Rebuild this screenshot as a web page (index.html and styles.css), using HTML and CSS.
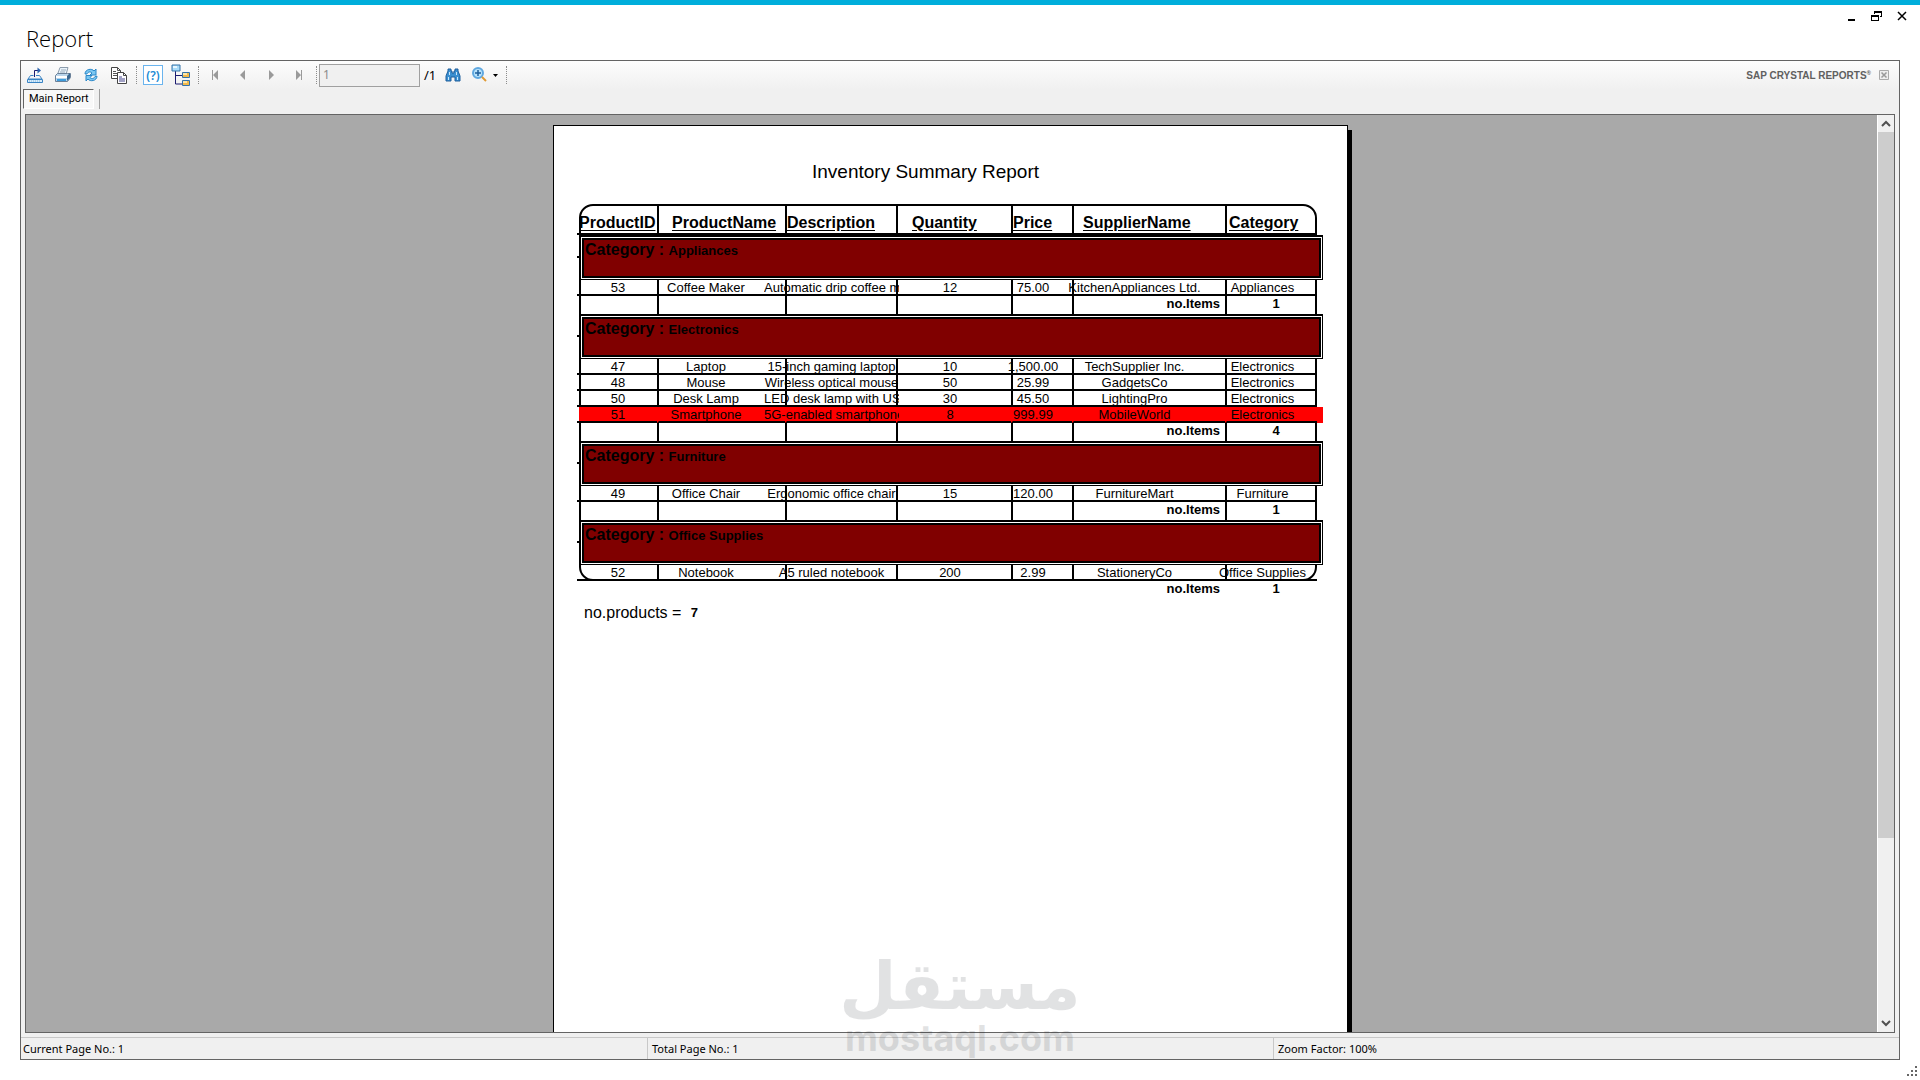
FILE: index.html
```
<!DOCTYPE html>
<html lang="en">
<head>
    <meta charset="UTF-8">
    <meta name="viewport" content="width=device-width, initial-scale=1.0">
    <title>Report</title>
    <link rel="stylesheet" href="styles.css">
</head>
<body>
    <header class="titlebar">
        <h1>Report</h1>
        <div class="window-buttons">
            <button type="button" aria-label="Minimize"><svg width="12" height="12"><path d="M2 9h7v2H2z"/></svg></button>
            <button type="button" aria-label="Restore"><svg width="12" height="12"><path d="M3 1h8v6H9V6h1V3H4v1H3zM0 5h8v6H0zM1 7v3h6V7z" fill-rule="evenodd"/></svg></button>
            <button type="button" aria-label="Close"><svg width="12" height="12"><path d="M2 2l8 8M10 2l-8 8" stroke="#000" stroke-width="1.500"/></svg></button>
        </div>
    </header>

    <main class="viewer">
        <div class="toolbar">
            <button type="button" aria-label="Export">
                <svg width="18" height="18" fill="none"><path d="M4.500 9.500L2 13h14l-2.500-3.500M4.500 9.500h3M10 9.500h3.500" stroke="#3a84c4"/><path d="M1.500 13.500h15v3h-15z" fill="#d8ecfa" stroke="#3a84c4"/><path d="M3 15h12" stroke="#7ab4e0" stroke-dasharray="1 1"/><path d="M8.500 11V4.500H14" stroke="#1c1c70"/><path d="M11.500 1.500l3.500 3-3.500 3z" fill="#2a62ac"/></svg>
            </button>
            <button type="button" aria-label="Print">
                <svg width="18" height="18"><path d="M6 1.500h8l-2 7H3.500z" fill="#eaf4fb" stroke="#8c9cac"/><path d="M7 4h5M6 6h5" stroke="#9aaabb"/><path d="M1.500 9.500l2-2h10l3 0v4l-3 4h-12z" fill="#b9d4ea" stroke="#6b8199"/><path d="M2 10h11v2H2z" fill="#fff"/><path d="M3 13h9v2H3z" fill="#3e9cdc"/><path d="M13 10l3-3v5l-3 3z" fill="#3a668f"/></svg>
            </button>
            <button type="button" aria-label="Refresh">
                <svg width="18" height="18"><path d="M3 8c0-5 7-6 9-3l2-2v6H8l2-2c-2-2-4-1-5 1z" fill="#7cc7f1" stroke="#2886c8"/><path d="M15 10c0 5-7 6-9 3l-2 2V9.500h6l-2 2c2 2 4 1 5-1z" fill="#7cc7f1" stroke="#2886c8"/></svg>
            </button>
            <button type="button" aria-label="Copy">
                <svg width="18" height="18"><path d="M1.500 1.500h6l3 3v8h-9z" fill="#fff" stroke="#444"/><path d="M7.500 1.500v3h3M3 5.500h3M3 7.500h5M3 9.500h5" fill="none" stroke="#555"/><path d="M7.500 6.500h6l3 3v8h-9z" fill="#fff" stroke="#444"/><path d="M13.500 6.500v3h3" fill="none" stroke="#444"/><path d="M9 11h3M9 13h6M9 15h6" stroke="#44448c"/></svg>
            </button>
            <span class="separator"></span>
            <button type="button" class="parameters" aria-label="Parameters">(?)</button>
            <button type="button" aria-label="Group tree">
                <svg width="20" height="22"><path d="M4.500 7v13H12M4.500 11.500H12" fill="none" stroke="#1c1c70"/><path d="M1 1h8v6H1z" fill="#a9dcfa" stroke="#3472a8"/><path d="M2 2h4v2H2z" fill="#e8f7ff"/><path d="M11.500 8.500h7v5h-7zM11.500 16.500h7v5h-7z" fill="#f2b94b" stroke="#3472a8"/><path d="M12 9h4v2h-4zM12 17h4v2h-4z" fill="#ffe6a8"/></svg>
            </button>
            <span class="separator"></span>
            <button type="button" disabled aria-label="First page"><svg width="10" height="10" fill="#9a9a9a"><path d="M2 0h1v10H2zM8 0v10L3 5z"/></svg></button>
            <button type="button" disabled aria-label="Previous page"><svg width="10" height="10" fill="#9a9a9a"><path d="M7 0v10L2 5z"/></svg></button>
            <button type="button" disabled aria-label="Next page"><svg width="10" height="10" fill="#9a9a9a"><path d="M3 0v10l5-5z"/></svg></button>
            <button type="button" disabled aria-label="Last page"><svg width="10" height="10" fill="#9a9a9a"><path d="M2 0v10l5-5zM7 0h1v10H7z"/></svg></button>
            <span class="separator"></span>
            <input type="text" id="page" class="page-number" value="1" disabled>
            <label for="page" class="page-total">/1</label>
            <button type="button" aria-label="Find text">
                <svg width="16" height="14"><path d="M3 1h3v2h1v2h2V3h1V1h3v2l2 5v5h-5V9H6v4H1V8l2-5z" fill="#3a8fd0" stroke="#1e5f9c"/><path d="M3 9h1v3H3zM12 9h1v3h-1zM4 4h1v3H4zM11 4h1v3h-1z" fill="#c8e6fa"/></svg>
            </button>
            <button type="button" class="zoom-button" aria-label="Zoom">
                <svg width="28" height="18"><circle cx="7" cy="7" r="5" fill="#b8e2fb" stroke="#5fa8e0" stroke-width="2"/><path d="M4 7h6M7 4v6" stroke="#1e5f9c" stroke-width="1.500"/><path d="M11 11l4 4" stroke="#e09a34" stroke-width="2"/><path d="M22 8h5l-2.500 3z"/></svg>
            </button>
            <span class="separator"></span>
            <span class="brand">SAP CRYSTAL REPORTS<sup>®</sup></span>
            <button type="button" class="close-view" disabled aria-label="Close view"><svg width="12" height="12"><path d="M1.500 1.500h9v9h-9z" fill="#eee" stroke="#aaa"/><path d="M3.500 3.500l5 5M8.500 3.500l-5 5" stroke="#999" stroke-width="1.500"/></svg></button>
        </div>

        <div class="tabs">
            <button type="button" class="tab">Main Report</button>
            <span class="tab-end"></span>
        </div>

        <section class="canvas">
            <div class="pages">
                <article class="paper">
                    <h2>Inventory Summary Report</h2>
                    <div class="report">
                        <table>
                            <colgroup>
                                <col class="c-id"><col class="c-name"><col class="c-desc"><col class="c-qty"><col class="c-price"><col class="c-supplier"><col class="c-category">
                            </colgroup>
                            <thead>
                                <tr><th>ProductID</th><th>ProductName</th><th>Description</th><th>Quantity</th><th>Price</th><th>SupplierName</th><th>Category</th></tr>
                            </thead>
                            <tbody>
                                <tr class="group"><td colspan="7"><div class="band">Category : <span>Appliances</span></div></td></tr>
                                <tr class="item"><td><div>53</div></td><td><div>Coffee Maker</div></td><td><div>Automatic drip coffee maker</div></td><td><div>12</div></td><td><div>75.00</div></td><td><div>KitchenAppliances Ltd.</div></td><td><div>Appliances</div></td></tr>
                                <tr class="summary"><td></td><td></td><td></td><td></td><td></td><td>no.Items</td><td>1</td></tr>
                            </tbody>
                            <tbody>
                                <tr class="group"><td colspan="7"><div class="band">Category : <span>Electronics</span></div></td></tr>
                                <tr class="item"><td><div>47</div></td><td><div>Laptop</div></td><td><div>15-inch gaming laptop</div></td><td><div>10</div></td><td><div>1,500.00</div></td><td><div>TechSupplier Inc.</div></td><td><div>Electronics</div></td></tr>
                                <tr class="item"><td><div>48</div></td><td><div>Mouse</div></td><td><div>Wireless optical mouse</div></td><td><div>50</div></td><td><div>25.99</div></td><td><div>GadgetsCo</div></td><td><div>Electronics</div></td></tr>
                                <tr class="item"><td><div>50</div></td><td><div>Desk Lamp</div></td><td><div>LED desk lamp with USB</div></td><td><div>30</div></td><td><div>45.50</div></td><td><div>LightingPro</div></td><td><div>Electronics</div></td></tr>
                                <tr class="item low"><td><div>51</div></td><td><div>Smartphone</div></td><td><div>5G-enabled smartphone</div></td><td><div>8</div></td><td><div>999.99</div></td><td><div>MobileWorld</div></td><td><div>Electronics</div></td></tr>
                                <tr class="summary"><td></td><td></td><td></td><td></td><td></td><td>no.Items</td><td>4</td></tr>
                            </tbody>
                            <tbody>
                                <tr class="group"><td colspan="7"><div class="band">Category : <span>Furniture</span></div></td></tr>
                                <tr class="item"><td><div>49</div></td><td><div>Office Chair</div></td><td><div>Ergonomic office chair</div></td><td><div>15</div></td><td><div>120.00</div></td><td><div>FurnitureMart</div></td><td><div>Furniture</div></td></tr>
                                <tr class="summary"><td></td><td></td><td></td><td></td><td></td><td>no.Items</td><td>1</td></tr>
                            </tbody>
                            <tbody>
                                <tr class="group"><td colspan="7"><div class="band">Category : <span>Office Supplies</span></div></td></tr>
                                <tr class="item"><td><div>52</div></td><td><div>Notebook</div></td><td><div>A5 ruled notebook</div></td><td><div>200</div></td><td><div>2.99</div></td><td><div>StationeryCo</div></td><td><div>Office Supplies</div></td></tr>
                                <tr class="summary last"><td></td><td></td><td></td><td></td><td></td><td>no.Items</td><td>1</td></tr>
                            </tbody>
                        </table>
                    </div>
                    <p class="total">no.products = <b>7</b></p>
                </article>
            </div>
            <div class="scrollbar">
                <svg width="16" height="17" fill="none" stroke="#505050" stroke-width="2"><path d="M4 11l4-4 4 4"/></svg>
                <div class="track"><div class="thumb"></div></div>
                <svg width="16" height="17" fill="none" stroke="#505050" stroke-width="2"><path d="M4 6l4 4 4-4"/></svg>
            </div>
        </section>

        <footer class="statusbar">
            <span>Current Page No.: 1</span>
            <span>Total Page No.: 1</span>
            <span>Zoom Factor: 100%</span>
        </footer>
    </main>

    <svg class="grip" width="12" height="12" fill="#666"><path d="M9 0h2v2H9zM5 4h2v2H5zM9 4h2v2H9zM1 8h2v2H1zM5 8h2v2H5zM9 8h2v2H9z"/></svg>

    <div class="watermark">
        <span class="watermark-ar" lang="ar" dir="rtl">مستقل</span>
        <span class="watermark-en">mostaql.com</span>
    </div>
</body>
</html>
```
FILE: styles.css
```
* {
    box-sizing: border-box;
}

body {
    margin: 0;
    height: 100vh;
    padding: 0 20px 20px;
    display: flex;
    flex-direction: column;
    position: relative;
    overflow: hidden;
    border-top: 5px solid #00aedb;
    background: #fff;
    color: #000;
    font-family: "Noto Sans", sans-serif;
    font-size: 11px;
}

button {
    padding: 0;
    border: none;
    background: none;
    font-family: inherit;
    font-size: inherit;
    color: inherit;
}

svg {
    display: block;
}

/* window title */
.titlebar {
    flex: none;
    height: 55px;
    display: flex;
    justify-content: space-between;
    align-items: flex-start;
}

.titlebar h1 {
    margin: 0;
    padding: 17px 0 0 6px;
    font-family: "Open Sans", sans-serif;
    font-size: 22px;
    font-weight: 300;
    line-height: 32px;
}

.window-buttons {
    display: flex;
    gap: 13px;
    margin-right: -8px;
    padding-top: 5px;
}

/* report viewer */
.viewer {
    flex: 1;
    min-height: 0;
    display: flex;
    flex-direction: column;
    border: 1px solid #646464;
    background: #f0f0f0;
}

.toolbar {
    flex: none;
    height: 28px;
    display: flex;
    align-items: center;
    background: linear-gradient(#fdfdfd, #f0f0f0);
}

.toolbar button {
    width: 28px;
    height: 24px;
    display: flex;
    align-items: center;
    justify-content: center;
}

.separator {
    width: 1px;
    height: 18px;
    margin: 0 2px 0 3px;
    border-left: 1px dotted #8c8c8c;
}

.toolbar .parameters {
    width: 20px;
    height: 20px;
    margin: 0 4px;
    border: 1px solid #6ab4ee;
    background: #fff;
    color: #1a8ad4;
    font-size: 12px;
    font-weight: 600;
}

.page-number {
    width: 101px;
    height: 23px;
    padding: 0 3px 2px;
    border: 1px solid #a0a0a0;
    background: #f0f0f0;
    color: #8c8c8c;
    font-family: inherit;
    font-size: 12px;
}

.page-total {
    width: 19px;
    padding-left: 4px;
    font-size: 13px;
}

.toolbar .zoom-button {
    width: 36px;
}

.brand {
    margin-left: auto;
    color: #606060;
    font-family: "Liberation Sans", Arial, sans-serif;
    font-size: 10px;
    font-weight: bold;
}

.brand sup {
    font-size: 6px;
    line-height: 0;
}

.toolbar .close-view {
    width: 26px;
    margin-right: 2px;
}

.tabs {
    flex: none;
    height: 25px;
    padding: 0 2px;
    display: flex;
    align-items: flex-start;
    gap: 5px;
}

.tab {
    height: 20px;
    padding: 0 4px 0 5px;
    border: 1px solid #fff;
    border-top: 1px solid #646464;
    border-left: 1px solid #646464;
    background: #f8f8f8;
    font-family: Roboto, sans-serif;
    line-height: 18px;
}

.tab-end {
    width: 1px;
    height: 20px;
    background: #a0a0a0;
}

.canvas {
    flex: 1;
    min-height: 0;
    margin: 0 4px;
    display: flex;
    border: 1px solid #646464;
    background: #a9a9a9;
}

.pages {
    flex: 1;
    overflow: hidden;
    padding: 10px 2px 0 0;
}

.scrollbar {
    flex: none;
    width: 17px;
    display: flex;
    flex-direction: column;
    border-left: 1px solid #fff;
    background: #f0f0f0;
}

.track {
    flex: 1;
}

.thumb {
    height: 80%;
    background: #cdcdcd;
}

/* A4 sheet at 100% */
.paper {
    width: 795px;
    min-height: 1123px;
    margin: 0 auto;
    padding: 34px 0 0 25px;
    border: 1px solid #000;
    background: #fff;
    box-shadow: 4px 5px 0 #000;
    font-family: "Liberation Sans", Arial, sans-serif;
    font-size: 13px;
}

.paper h2 {
    margin: 0 75px 20px 0;
    font-size: 19px;
    font-weight: normal;
    line-height: 24px;
    text-align: center;
}

.report {
    width: 738px;
    position: relative;
    isolation: isolate;
}

/* rounded box behind the grid */
.report::before {
    content: "";
    position: absolute;
    inset: 0 0 18px;
    z-index: -1;
    border: 2px solid #000;
    border-radius: 14px;
}

table {
    width: 100%;
    table-layout: fixed;
    border-collapse: separate;
    border-spacing: 0;
}

.c-id { width: 78px; }
.c-name { width: 128px; }
.c-desc { width: 111px; }
.c-qty { width: 115px; }
.c-price { width: 61px; }
.c-supplier { width: 153px; }
.c-category { width: 92px; }

th, td {
    padding: 0;
    border-left: 2px solid #000;
    line-height: 16px;
    text-align: center;
    vertical-align: top;
    white-space: nowrap;
}

th:first-child, td:first-child {
    position: relative;
    border-left: none;
}

th {
    height: 31px;
    padding-top: 9px;
    border-bottom: 2px solid #000;
    font-size: 16px;
    line-height: 20px;
    text-align: left;
    text-decoration: underline;
    text-underline-offset: 2px;
}

th:nth-child(2) { padding-left: 13px; }
th:nth-child(4) { padding-left: 14px; }
th:nth-child(6) { padding-left: 9px; }
th:nth-child(7) { padding-left: 2px; }

/* row rules stick out a little on the left */
th:first-child::before,
.item td:first-child::before {
    content: "";
    position: absolute;
    left: -2px;
    bottom: -2px;
    width: 2px;
    height: 2px;
    background: #000;
}

.band {
    height: 45px;
    margin: 0 -6px 0 1px;
    padding: 3px 4px;
    border: 1px solid #000;
    border-top-width: 2px;
    background: #800000;
    box-shadow: inset 0 0 0 1px #fff, inset 0 0 0 3px #000;
    font-size: 16px;
    font-weight: bold;
    line-height: 20px;
    text-align: left;
}

.band span {
    font-size: 13px;
}

.band::before {
    content: "";
    position: absolute;
    left: -2px;
    top: 21px;
    width: 4px;
    height: 2px;
    background: #000;
}

.item td {
    height: 16px;
    border-bottom: 2px solid #000;
}

.item div {
    overflow: hidden;
    height: 14px;
}

.item td:nth-child(2) div { margin-right: 32px; }
.item td:nth-child(3) div { margin: 0 -3px 0 -23px; }
.item td:nth-child(4) div { margin-right: 9px; }
.item td:nth-child(5) div { margin: 0 12px 0 -7px; }
.item td:nth-child(6) div { margin: 0 24px 0 -6px; }
.item td:nth-child(7) div { margin: 0 8px 0 -11px; }

.low {
    background: #f00;
}

.low td {
    border-left-color: #f00;
}

.low td:last-child {
    box-shadow: 6px 0 0 #f00;
}

.summary td {
    height: 18px;
    font-weight: bold;
}

.summary td:nth-child(6) {
    padding-right: 5px;
    text-align: right;
}

.summary td:nth-child(7) {
    padding-left: 8px;
}

.last td {
    border-color: transparent;
}

.total {
    margin: 4px 0 0 5px;
    font-size: 16px;
    line-height: 20px;
}

.total b {
    margin-left: 5px;
    font-size: 13px;
    vertical-align: top;
}

.statusbar {
    flex: none;
    height: 22px;
    margin-top: 4px;
    display: grid;
    grid-template-columns: repeat(3, 1fr);
    border-top: 1px solid #c8c8c8;
    line-height: 21px;
}

.statusbar span {
    padding-left: 4px;
    border-left: 1px solid #c8c8c8;
}

.statusbar span:first-child {
    padding-left: 2px;
    border-left: none;
}

.grip {
    position: absolute;
    right: 2px;
    bottom: 2px;
}

.watermark {
    position: absolute;
    left: 0;
    right: 0;
    bottom: 19px;
    display: flex;
    flex-direction: column;
    align-items: center;
    color: #141923;
    opacity: 0.12;
    font-weight: bold;
    pointer-events: none;
}

.watermark-ar {
    font-family: "DejaVu Sans", sans-serif;
    font-size: 66px;
    line-height: 56px;
}

.watermark-en {
    font-family: Inter, sans-serif;
    font-size: 36px;
    line-height: 46px;
}
```
